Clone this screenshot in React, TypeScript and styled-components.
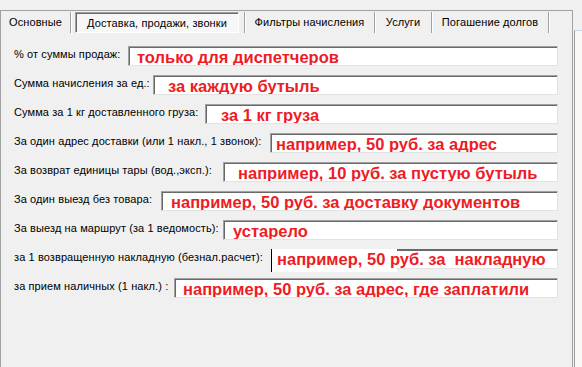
import React from "react"
import styled, { createGlobalStyle } from "styled-components"

const GlobalStyle = createGlobalStyle`
  html, body {
    margin: 0;
    padding: 0;
    background: #f0f0f0;
  }
  body {
    font-family: "Liberation Sans", Arial, sans-serif;
    font-size: 11px;
    color: #000;
  }
`

const Window = styled.div`
  width: 582px;
  height: 367px;
  display: flex;
  overflow: hidden;
  background: #f0f0f0;
`

const Frame = styled.div`
  width: 571px;
  margin-top: 10px;
  border-top: 1px solid #a0a0a0;
  border-left: 1px solid #a0a0a0;
  border-right: 1px solid #a0a0a0;
  display: flex;
  flex-direction: column;
`

const SideStrip = styled.div`
  flex: 1;
  display: flex;
  flex-direction: column;
  padding-top: 30px;
  margin-left: 1px;
`

const SidePane = styled.div`
  flex: 1;
  border-left: 1px solid #a0a0a0;
  border-top: 1px solid #c9d6e8;
  background: #f9f8f6;
`

const TabStrip = styled.div`
  display: flex;
  height: 21px;
  margin-top: 1px;
`

const Tab = styled.div<{ $w: number; $active?: boolean }>`
  width: ${({ $w }) => $w}px;
  display: flex;
  align-items: stretch;
  padding: 0 ${({ $active }) => ($active ? 5 : 0)}px 0 ${({ $active }) => ($active ? 4 : 0)}px;
`

const TabFace = styled.div<{ $active?: boolean }>`
  flex: 1;
  display: flex;
  align-items: center;
  justify-content: center;
  white-space: nowrap;
  line-height: 13px;
  letter-spacing: 0.1px;
  ${({ $active }) =>
    $active &&
    `
    border: 1px solid;
    border-color: #a0a0a0 #ffffff #ffffff #a0a0a0;
    box-shadow: inset 1px 1px 0 #696969;
    background: #f7f7f7;
    padding-top: 1px;
  `}
`

const TabSep = styled.div`
  width: 1px;
  background: #a0a0a0;
  box-shadow: 1px 0 0 #ffffff;
`

const Rows = styled.div`
  display: flex;
  flex-direction: column;
  gap: 9px;
  padding: 13px 0 0 13px;
`

const Row = styled.div`
  display: flex;
  align-items: flex-start;
  height: 20px;
`

const Label = styled.div<{ $w: number }>`
  width: ${({ $w }) => $w}px;
  flex: none;
  padding-top: 2px;
  line-height: 13px;
  letter-spacing: 0.1px;
  white-space: nowrap;
`

const fieldText = `
  font-family: "Liberation Sans", Arial, sans-serif;
  font-weight: bold;
  font-size: 16.5px;
  line-height: 18px;
  color: #ee1c25;
  white-space: pre;
`

const Field = styled.div<{ $indent: number }>`
  flex: 1;
  height: 20px;
  margin-right: 14px;
  box-sizing: border-box;
  border: 1px solid;
  border-color: #a0a0a0 #e3e3e3 #e3e3e3 #a0a0a0;
  box-shadow: inset 1px 1px 0 #696969;
  background: #ffffff;
  padding: 1px 0 0 ${({ $indent }) => $indent}px;
  overflow: hidden;
  ${fieldText}
`

const StaleGroup = styled.div`
  flex: 1;
  display: flex;
  align-items: flex-start;
  margin-right: 14px;
`

const StaleBlock = styled.div`
  width: 126px;
  height: 23px;
  flex: none;
  border-left: 1px solid #000;
  background: #ffffff;
  padding: 1px 0 0 5px;
  box-sizing: border-box;
  position: relative;
  z-index: 1;
  ${fieldText}
`

const StaleField = styled.div`
  flex: 1;
  height: 20px;
  box-sizing: border-box;
  border-top: 2px solid #696969;
  border-right: 1px solid #e3e3e3;
  border-bottom: 1px solid #e3e3e3;
  background: #ffffff;
`

type RowItem = {
  label: string
  labelWidth: number
  value: string
  indent: number
  stale?: boolean
}

const tabs = [
  { title: "Основные", w: 69 },
  { title: "Доставка, продажи, звонки", w: 164, active: true },
  { title: "Фильтры начисления", w: 129 },
  { title: "Услуги", w: 56 },
  { title: "Погашение долгов", w: 116 },
]

const rows: RowItem[] = [
  { label: "% от суммы продаж:", labelWidth: 114, value: "только для диспетчеров", indent: 8 },
  { label: "Сумма начисления за ед.:", labelWidth: 139, value: "за каждую бутыль", indent: 14 },
  { label: "Сумма за 1 кг доставленного груза:", labelWidth: 191, value: "за 1 кг груза", indent: 15 },
  { label: "За один адрес доставки (или 1 накл., 1 звонок):", labelWidth: 256, value: "например, 50 руб. за адрес", indent: 5 },
  { label: "За возврат единицы тары (вод.,эксп.):", labelWidth: 209, value: "например, 10 руб. за пустую бутыль", indent: 14 },
  { label: "За один выезд без товара:", labelWidth: 147, value: "например, 50 руб. за доставку документов", indent: 9 },
  { label: "За выезд на маршрут (за 1 ведомость):", labelWidth: 209, value: "устарело", indent: 9 },
  { label: "за 1 возвращенную накладную (безнал.расчет):", labelWidth: 257, value: "например, 50 руб. за  накладную", indent: 5, stale: true },
  { label: "за прием наличных (1 накл.) :", labelWidth: 160, value: "например, 50 руб. за адрес, где заплатили", indent: 8 },
]

export default function App() {
  return (
    <Window>
      <GlobalStyle />
      <Frame>
        <TabStrip>
          {tabs.map(t => (
            <React.Fragment key={t.title}>
              <Tab $w={t.w} $active={t.active}>
                <TabFace $active={t.active}>{t.title}</TabFace>
              </Tab>
              <TabSep />
            </React.Fragment>
          ))}
        </TabStrip>
        <Rows>
          {rows.map(r => (
            <Row key={r.label}>
              <Label $w={r.labelWidth}>{r.label}</Label>
              {r.stale ? (
                <StaleGroup>
                  <StaleBlock>{r.value}</StaleBlock>
                  <StaleField />
                </StaleGroup>
              ) : (
                <Field $indent={r.indent}>{r.value}</Field>
              )}
            </Row>
          ))}
        </Rows>
      </Frame>
      <SideStrip>
        <SidePane />
      </SideStrip>
    </Window>
  )
}
